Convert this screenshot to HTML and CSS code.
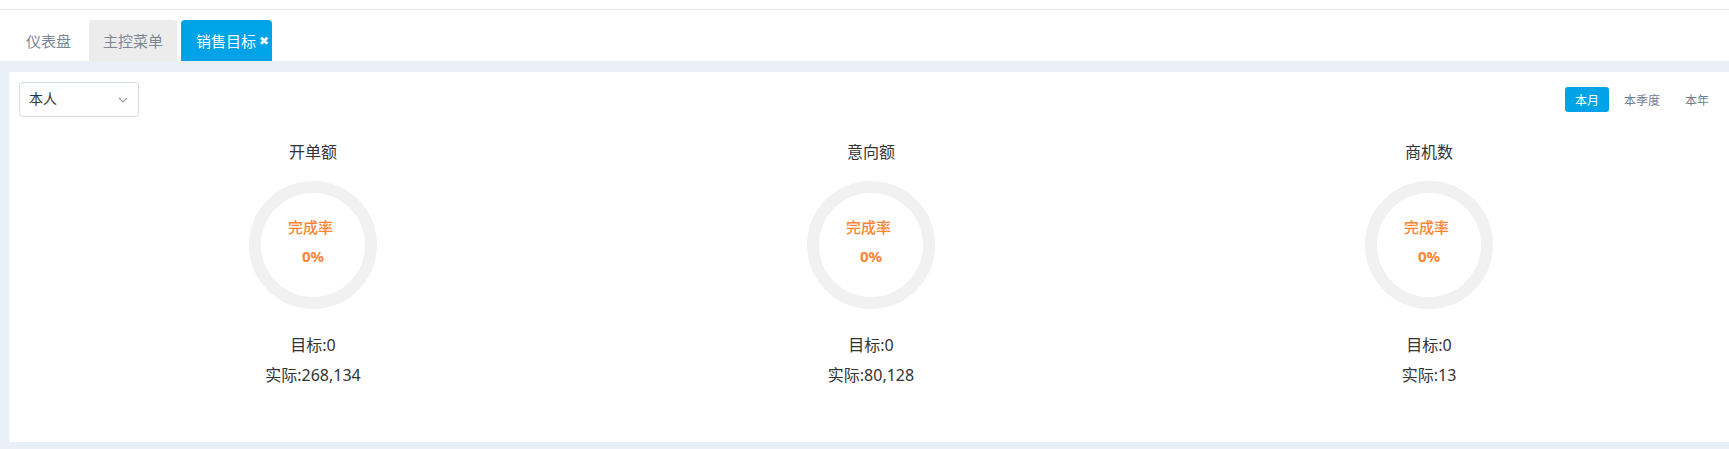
FILE: index.html
```html
<!DOCTYPE html>
<html lang="zh-CN">

<head>
    <meta charset="UTF-8">
    <title>销售目标</title>
    <link rel="stylesheet" href="styles.css">
</head>

<body>
    <div class="topbar"></div>

    <div class="tabs">
        <a class="tab">仪表盘</a>
        <a class="tab tab-grey">主控菜单</a>
        <a class="tab tab-active">销售目标<span class="tab-close">&#10006;</span></a>
    </div>

    <div class="content">
        <div class="panel">
            <div class="toolbar">
                <div class="select">
                    <span>本人</span>
                    <svg class="chevron" width="10" height="6" viewBox="0 0 10 6">
                        <path d="M1 1 L5 5 L9 1" fill="none" stroke="#9aa1ab" stroke-width="1.2"/>
                    </svg>
                </div>
                <div class="range">
                    <span class="range-btn active">本月</span>
                    <span class="range-btn">本季度</span>
                    <span class="range-btn">本年</span>
                </div>
            </div>

            <div class="stats">
                <div class="stat">
                    <div class="stat-title">开单额</div>
                    <div class="ring">
                        <div class="ring-label">完成率</div>
                        <div class="ring-value">0%</div>
                    </div>
                    <div class="stat-line first">目标:0</div>
                    <div class="stat-line">实际:268,134</div>
                </div>
                <div class="stat">
                    <div class="stat-title">意向额</div>
                    <div class="ring">
                        <div class="ring-label">完成率</div>
                        <div class="ring-value">0%</div>
                    </div>
                    <div class="stat-line first">目标:0</div>
                    <div class="stat-line">实际:80,128</div>
                </div>
                <div class="stat">
                    <div class="stat-title">商机数</div>
                    <div class="ring">
                        <div class="ring-label">完成率</div>
                        <div class="ring-value">0%</div>
                    </div>
                    <div class="stat-line first">目标:0</div>
                    <div class="stat-line">实际:13</div>
                </div>
            </div>
        </div>
    </div>
</body>

</html>
```

FILE: styles.css
```css
body {
    margin: 0;
    font-family: "Noto Sans", "Noto Sans CJK SC", sans-serif;
    color: #333;
    background: #fff;
    height: 449px;
    display: flex;
    flex-direction: column;
}

.topbar {
    height: 9px;
    border-bottom: 1px solid #e4e6ea;
}

.tabs {
    display: flex;
    gap: 4px;
    padding: 10px 0 0 12px;
    height: 41px;
}

.tab {
    display: flex;
    align-items: center;
    padding: 0 14px;
    font-size: 15px;
    color: #7b8799;
    border-radius: 4px 4px 0 0;
    height: 41px;
    white-space: nowrap;
}

.tab-grey {
    background: #ececec;
}

.tab-active {
    background: #00a2e8;
    color: #fff;
    padding: 0 3px 0 15px;
}

.tab-close {
    font-size: 12px;
    margin-left: 3px;
}

.content {
    flex: 1;
    background: #e9f0f7;
    padding: 11px 0 7px 9px;
    display: flex;
}

.panel {
    flex: 1;
    background: #fff;
}

.toolbar {
    display: flex;
    justify-content: space-between;
    align-items: center;
    padding: 10px 10px 0 10px;
}

.select {
    width: 120px;
    height: 35px;
    box-sizing: border-box;
    border: 1px solid #d5dbe5;
    border-radius: 4px;
    display: flex;
    align-items: center;
    justify-content: space-between;
    padding: 0 10px 3px 9px;
    font-size: 14px;
}

.select .chevron {
    margin-top: 3px;
}

.range {
    display: flex;
    gap: 5px;
}

.range-btn {
    display: flex;
    align-items: center;
    justify-content: center;
    height: 25px;
    padding: 0 10px;
    font-size: 12px;
    color: #6f7d92;
    border-radius: 3px;
}

.range-btn.active {
    background: #00a2e8;
    color: #fff;
}

.stats {
    display: grid;
    grid-template-columns: repeat(3, 1fr);
    padding: 24px 21px 0 25px;
}

.stat {
    display: flex;
    flex-direction: column;
    align-items: center;
}

.stat-title {
    font-size: 16px;
    line-height: 22px;
}

.ring {
    margin-top: 18px;
    width: 128px;
    height: 128px;
    box-sizing: border-box;
    border: 12px solid #f1f1f1;
    border-radius: 50%;
    display: flex;
    flex-direction: column;
    align-items: center;
    justify-content: center;
    color: #ff8533;
    font-size: 15px;
    line-height: 29px;
    padding-bottom: 6px;
}

.ring-label {
    margin-left: -5px;
    font-weight: 500;
}

.ring-value {
    font-weight: bold;
}

.stat-line {
    font-size: 16px;
    line-height: 30px;
}

.stat-line.first {
    margin-top: 21px;
}
```
